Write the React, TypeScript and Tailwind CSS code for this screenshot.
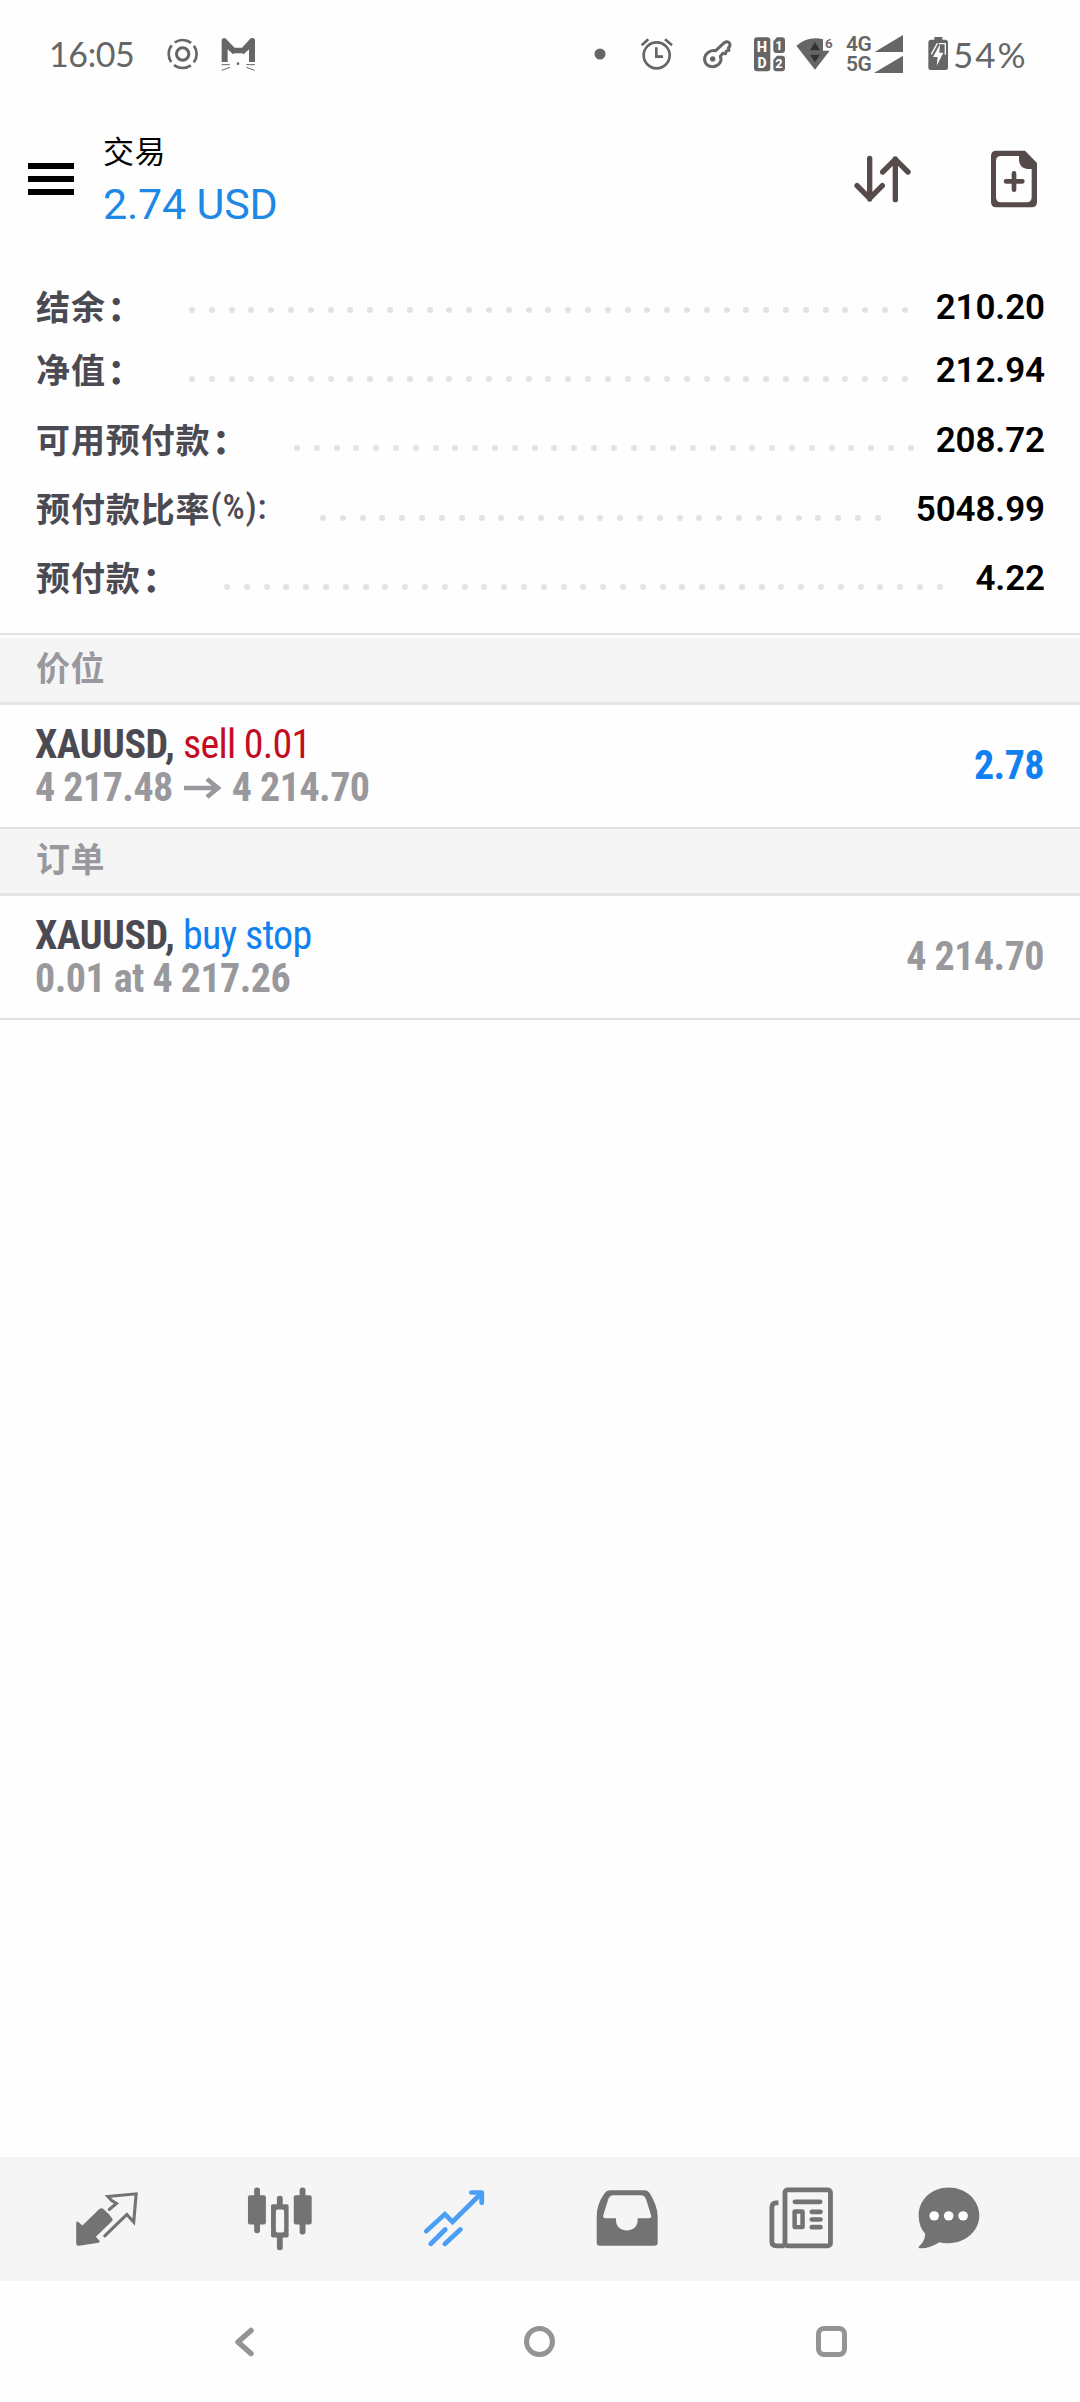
import type { ReactNode } from "react";

const account = [
  { label: "结余", suffix: "：", value: "210.20", dots: 37, row: "h-[63px]", leader: "left-[189px] w-[719px] top-[31px]" },
  { label: "净值", suffix: "：", value: "212.94", dots: 37, row: "h-[70px]", leader: "left-[189px] w-[719px] top-[37px]" },
  { label: "可用预付款", suffix: "：", value: "208.72", dots: 32, row: "h-[69px]", leader: "left-[294px] w-[620px] top-[36px]" },
  { label: "预付款比率", suffix: "(%):", value: "5048.99", dots: 29, row: "h-[69px]", leader: "left-[320px] w-[561px] top-[37px]" },
  { label: "预付款", suffix: "：", value: "4.22", dots: 37, row: "h-[86px]", leader: "left-[224px] w-[719px] top-[37px]" },
];

function StatusBar() {
  return (
    <div className="flex h-[108px] items-center pl-[49px] text-[#666] font-[Lato,sans-serif]">
      <span className="w-[117px] text-[34px] leading-[40px] tracking-[-0.4px]">16:05</span>
      <svg className="h-10 w-[34px]" viewBox="498 102 102 120" fill="none" stroke="currentColor">
        <circle cx="548" cy="162" r="18.5" strokeWidth="9" />
        <circle cx="548" cy="162" r="42" strokeWidth="8" strokeDasharray="54 11.97" strokeDashoffset="27" transform="rotate(-90 548 162)" />
      </svg>
      <svg className="ml-[20px] h-10 w-[36px]" viewBox="661 102 108 120" fill="currentColor">
        <path d="M666 186V119Q667 113 677 115L705 143H727L753 115Q764 112 766 119V186H748V148L732 163 728 160H704L700 163 684 148V186Z" />
        <circle cx="715" cy="191" r="4" />
        <path d="M666 194H690M740 194H766M666 211L691 202M740 202L765 211" stroke="currentColor" strokeWidth="3" />
      </svg>
      <svg className="ml-[338px] h-10 w-3" viewBox="102 42 36 120" fill="currentColor">
        <circle cx="120" cy="102" r="16.5" />
      </svg>
      <svg className="ml-[34px] h-10 w-[34px]" viewBox="240 42 102 120" fill="none" stroke="currentColor" strokeWidth="8">
        <circle cx="290" cy="106" r="39" />
        <path d="M289 82V110H309M245 76L265 58M336 76L315 58" />
      </svg>
      <svg className="ml-[28px] h-10 w-8" viewBox="426 42 96 120" fill="none" stroke="currentColor" strokeWidth="9" strokeLinejoin="round">
        <path d="M467 92L493 68Q500 63 506 67Q512 72 509 79L505 84 507 91 499 93 497 101 489 100 481 109C487 122 478 139 459 140C442 140 432 129 434 113C437 99 450 90 467 92Z" />
        <circle cx="458" cy="117" r="8" fill="currentColor" stroke="none" />
      </svg>
      <svg className="ml-[19px] h-10 w-[34px]" viewBox="577 42 102 120" fill="currentColor">
        <rect x="580" y="52" width="49" height="102" rx="9" />
        <path d="M649 52H664Q673 52 673 61V90Q673 99 664 99H647Q638 99 638 90V64ZM649 107H664Q673 107 673 116V145Q673 154 664 154H647Q638 154 638 145V119Z" />
        <g fill="#fff" fontFamily="Roboto, sans-serif" fontWeight="800" textAnchor="middle">
          <text x="604" y="96" fontSize="44">H</text>
          <text x="604" y="143" fontSize="42">D</text>
          <text x="655" y="90" fontSize="38">1</text>
          <text x="655" y="145" fontSize="38">2</text>
        </g>
      </svg>
      <svg className="ml-[8px] h-10 w-[40px]" viewBox="702 42 120 120" fill="currentColor">
        <path d="M706 77Q743 47 786 58V92H806L762 149Z" />
        <path d="M762 66L777 91H747ZM762 127L747 104H777Z" fill="#333" />
        <text x="792" y="84" fontSize="40" fontWeight="600" fontFamily="Roboto, sans-serif">6</text>
      </svg>
      <div className="ml-[11px] flex h-10 w-[28px] flex-col font-[Roboto,sans-serif] text-[21px] font-semibold leading-[20px] tracking-[-0.5px]">
        <span>4G</span>
        <span>5G</span>
      </div>
      <svg className="h-10 w-[30px]" viewBox="942 42 90 120" fill="currentColor">
        <path d="M944 96L1029 45V96ZM942 159L1029 107V159Z" />
      </svg>
      <svg className="ml-[23px] h-10 w-[22px]" viewBox="1101 42 66 120" fill="currentColor">
        <path d="M1123 51H1147V59H1157Q1164 60 1164 67V143Q1164 150 1157 150H1112Q1105 150 1105 143V67Q1105 60 1112 59H1123Z" />
        <path d="M1136 71H1156V104M1132 70L1114 103" fill="none" stroke="#fff" strokeWidth="4" />
        <path d="M1140 73L1119 111H1133L1130 137 1150 98H1138Z" fill="#fff" />
      </svg>
      <span className="ml-[4px] text-[35px] leading-[40px] tracking-[2px]">54%</span>
    </div>
  );
}

function Header() {
  return (
    <header className="flex h-[167px] pl-7">
      <div className="mt-[55px] flex w-[46px] flex-col gap-[7px]">
        <span className="h-[6px] bg-black" />
        <span className="h-[6px] bg-black" />
        <span className="h-[6px] bg-black" />
      </div>
      <div className="ml-[29px] mt-[21px] w-[400px]">
        <h1 className="font-['Noto_Sans_CJK_SC',sans-serif] text-[31px] leading-[42px] tracking-[0.5px] text-black">交易</h1>
        <p className="mt-[8px] font-[Roboto,sans-serif] text-[43px] leading-[50px] tracking-[-0.2px] text-[#1e88e5]">2.74 USD</p>
      </div>
      <svg className="ml-[350px] mt-[45px] h-[52px] w-[60px]" viewBox="219 129 180 156" fill="none" stroke="#564a4a" strokeWidth="16" strokeLinecap="round" strokeLinejoin="round">
        <path d="M269 145V267M231 227L269 265 307 227M346 269V147M308 186L346 148 384 186" />
      </svg>
      <svg className="ml-[76px] mt-[41px] h-[60px] w-[50px]" viewBox="627 117 150 180" fill="#564a4a">
        <path fillRule="evenodd" d="M649 122H735L771 159V276Q771 292 755 292H649Q633 292 633 276V138Q633 122 649 122ZM663 138Q648 138 648 153V262Q648 277 663 277H740Q755 277 755 262V177H742Q717 173 717 150V138Z" />
        <path d="M702 190V239M678 214H727" stroke="#564a4a" strokeWidth="14" strokeLinecap="round" />
      </svg>
    </header>
  );
}

function AccountRows() {
  return (
    <section className="pt-px">
      {account.map((item) => (
        <div key={item.label} className={`relative flex justify-between pl-[36px] pr-[35px] ${item.row}`}>
          <span className="flex whitespace-pre font-['Noto_Sans_CJK_SC',sans-serif] text-[34px] font-bold leading-[60px] tracking-[0.9px] text-[#4b4a52]">
            {item.label}
            {item.suffix === "：" ? (
              <span className="relative left-[2px] top-px font-black">{item.suffix}</span>
            ) : (
              <span className="font-[Roboto,sans-serif] text-[35px] font-medium font-stretch-[85%] tracking-[0.8px]">{item.suffix}</span>
            )}
          </span>
          <div className={`absolute flex justify-between ${item.leader}`}>
            {Array.from({ length: item.dots }, (_, i) => (
              <i key={i} className="size-[6px] rounded-full bg-[#e3e3e3]" />
            ))}
          </div>
          <span className="font-[Roboto,sans-serif] text-[35px] font-semibold leading-[64px] tracking-[-0.1px] text-black">{item.value}</span>
        </div>
      ))}
    </section>
  );
}

function SectionTitle({ children }: { children: ReactNode }) {
  return (
    <h2 className="h-[67px] border-b-3 border-[#e5e5e5] bg-[#f5f5f5] pl-[36px] font-['Noto_Sans_CJK_SC',sans-serif] text-[34px] font-bold leading-[57px] tracking-[0.5px] text-[#98989d]">
      {children}
    </h2>
  );
}

type DealProps = {
  side: ReactNode;
  detail: ReactNode;
  value: ReactNode;
};

function Deal({ side, detail, value }: DealProps) {
  return (
    <div className="flex h-[124px] items-center justify-between border-b-2 border-[#e2e2e2] pl-[35px] pr-[36px] font-['Roboto_Condensed',Roboto,sans-serif] text-[40px] tracking-[-0.55px] font-stretch-condensed">
      <div className="leading-[43.5px]">
        <p>
          <span className="font-bold text-[#4b4a52]">XAUUSD, </span>
          {side}
        </p>
        <p className="flex items-center font-bold text-[#98989d]">{detail}</p>
      </div>
      <span className="font-bold">{value}</span>
    </div>
  );
}

function TabBar() {
  return (
    <nav className="flex h-[124px] items-center bg-[#f5f5f5] pl-[70px] text-[#737373]">
      <svg className="size-[72px]" viewBox="203 127.5 209 216" preserveAspectRatio="none" fill="currentColor">
        <path d="M221 246Q223 240 229 246L239 255 289 205Q294 201 299 205Q316 219 326 235Q328 240 324 243L278 289 288 300Q291 306 285 307L230 316Q221 317 221 309Z" />
        <path d="M317 207L338 189 324 180 313 168 395 160 388 245 368 222 304 286" fill="none" stroke="currentColor" strokeWidth="9" strokeLinecap="round" />
      </svg>
      <svg className="ml-[102px] size-[72px]" viewBox="708.5 127.5 209 216" preserveAspectRatio="none" fill="currentColor">
        <rect x="738" y="141" width="17" height="137" rx="8" />
        <rect x="720" y="164" width="52" height="88" rx="6" />
        <rect x="870" y="141" width="17" height="141" rx="8" />
        <rect x="853" y="164" width="52" height="88" rx="6" />
        <rect x="804" y="166" width="17" height="30" rx="8" />
        <rect x="804" y="284" width="17" height="45" rx="8" />
        <path fillRule="evenodd" d="M792 191H833Q838 191 838 196V286Q838 291 833 291H792Q787 291 787 286V196Q787 191 792 191ZM806 207Q801 207 801 212V271Q801 276 806 276H820Q825 276 825 271V212Q825 207 820 207Z" />
      </svg>
      <svg className="ml-[101.5px] size-[72px] text-[#4a9ff5]" viewBox="1212 127.5 209 216" preserveAspectRatio="none" fill="none" stroke="currentColor" strokeWidth="14" strokeLinecap="round">
        <path d="M1236 272L1290 221 1312 244 1395 159M1249 310L1291 267M1290 310L1335 267" />
        <path d="M1367 156H1397V187" strokeLinejoin="round" />
      </svg>
      <svg className="ml-[101px] size-[72px]" viewBox="149.5 127.5 209 216" preserveAspectRatio="none" fill="currentColor">
        <path fillRule="evenodd" d="M204 149H306Q315 149 320 158Q343 196 343 228V306Q343 316 333 316H176Q166 316 166 306V228Q166 190 189 158Q195 149 204 149ZM214 164Q204 165 200 175L185 225Q184 233 192 233H222V239C222 280 285 280 285 239V233H317Q326 233 324 225L309 175Q305 165 295 164Z" />
      </svg>
      <svg className="ml-[102px] size-[72px]" viewBox="655 127.5 209 216" preserveAspectRatio="none" fill="none" stroke="currentColor" strokeWidth="14" strokeLinecap="round">
        <rect x="713" y="148" width="132" height="168" rx="8" />
        <path d="M694 187H687Q675 188 675 200V304Q675 316 688 316H712" strokeLinecap="butt" />
        <path d="M742 184H815M791 214H816M791 237H816M791 260H816" />
        <rect x="741" y="213" width="23" height="47" rx="1" strokeWidth="13" />
      </svg>
      <svg className="ml-[76px] size-[72px]" viewBox="1084.5 127.5 209 216" preserveAspectRatio="none" fill="currentColor">
        <path d="M1188 141C1237 141 1277 178 1277 225C1277 271 1237 308 1188 308Q1174 309 1161 305Q1131 325 1103 323Q1098 321 1104 316Q1120 300 1120 280Q1101 259 1101 225C1101 178 1139 141 1188 141Z" />
        <g fill="#fff">
          <circle cx="1146" cy="226" r="14" />
          <circle cx="1188" cy="226" r="14" />
          <circle cx="1230" cy="226" r="14" />
        </g>
      </svg>
    </nav>
  );
}

function SystemNav() {
  return (
    <div className="flex h-[121px] items-center pl-[233px] text-[#949494]">
      <svg className="h-9 w-6" viewBox="0 0 24 36" fill="none" stroke="currentColor" strokeWidth="5.5" strokeLinecap="round" strokeLinejoin="round">
        <path d="M18 6.5L5 18L18 29.5" />
      </svg>
      <span className="ml-[267px] size-[31px] rounded-full border-5 border-current" />
      <span className="ml-[261px] size-[31px] rounded-[8px] border-5 border-current" />
    </div>
  );
}

export default function App() {
  return (
    <div className="flex h-[2402px] w-[1080px] flex-col overflow-hidden bg-[#fefefe]">
      <StatusBar />
      <Header />
      <AccountRows />
      <main className="flex-1">
        <div className="h-[5px] border-t-2 border-[#e2e2e2]" />
        <SectionTitle>价位</SectionTitle>
        <Deal
          side={<span className="tracking-[-0.75px] text-[#c30c22]">sell 0.01</span>}
          detail={
            <>
              4 217.48
              <svg className="mx-[11px] h-6 w-[37px]" viewBox="0 0 37 24" fill="none" stroke="currentColor" strokeWidth="4.5">
                <path d="M0 12H34M23 3L34 12L23 21" />
              </svg>
              4 214.70
            </>
          }
          value={<span className="text-[#1180f0]">2.78</span>}
        />
        <SectionTitle>订单</SectionTitle>
        <Deal
          side={<span className="tracking-[-0.75px] text-[#1180f0]">buy stop</span>}
          detail="0.01 at 4 217.26"
          value={<span className="text-[#98989d]">4 214.70</span>}
        />
      </main>
      <TabBar />
      <SystemNav />
    </div>
  );
}
